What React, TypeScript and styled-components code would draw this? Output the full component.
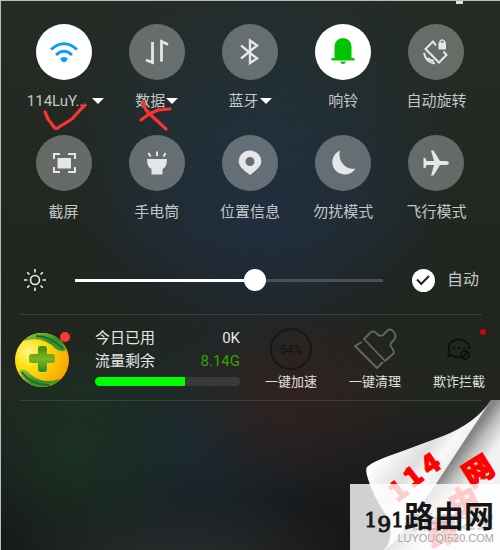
import React from "react";
import styled, { createGlobalStyle } from "styled-components";

const Global = createGlobalStyle`
  * { box-sizing: border-box; }
  body { margin: 0; background: #1d201c; }
  button, input { font: inherit; color: inherit; }
`;

const Shade = styled.main`
  position: relative;
  min-height: 100vh;
  overflow: hidden;
  border-top: 1px solid #b9bcb9;
  border-left: 1px solid #b9bcb9;
  font-family: Roboto, "Noto Sans CJK SC", sans-serif;
  color: #c4c7c6;
  background:
    radial-gradient(ellipse 200px 190px at 52% 130px, #20344299 0%, #20344266 50%, transparent 100%),
    radial-gradient(ellipse 190px 150px at 52% 215px, #1f2a42cc 0%, #1f2a4266 50%, transparent 100%),
    radial-gradient(ellipse 120px 100px at 59% 395px, #35201fcc 0%, transparent 100%),
    radial-gradient(ellipse 120px 130px at 14% 450px, #1a3523cc 0%, transparent 100%),
    radial-gradient(ellipse 140px 140px at 38% 445px, #1b2c34cc 0%, transparent 100%),
    radial-gradient(ellipse 190px 70px at 36% 560px, #2e2e2d 0%, transparent 100%),
    linear-gradient(#252b25 0, #20251f 300px, #22261f 390px, #1c1e20 450px, #141516 100%);
`;

const Tiles = styled.section`
  display: grid;
  grid-template-columns: repeat(5, 1fr);
  row-gap: 22px;
  padding: 23px 17px 0 16px;
`;

const Tile = styled.button`
  display: flex;
  flex-direction: column;
  align-items: center;
  gap: 9px;
  padding: 0;
  border: 0;
  background: none;
  font-size: 15px;
  line-height: 24px;
  white-space: nowrap;
`;

const Disc = styled.span<{ $on?: boolean }>`
  display: grid;
  place-items: center;
  width: 56px;
  height: 56px;
  border-radius: 50%;
  color: #e4e6e7;
  background: ${(p) => (p.$on ? "#fff" : "rgba(255,255,255,.31)")};
`;

const Caption = styled.span<{ $wide?: boolean }>`
  display: flex;
  align-items: center;
  padding-left: ${(p) => (p.$wide ? "4px" : "0")};
`;

const Caret = styled.i<{ $gap?: boolean }>`
  margin-left: ${(p) => (p.$gap ? "5px" : "1px")};
  border: 6px solid transparent;
  border-top-color: #fff;
  border-bottom: 0;
`;

const Brightness = styled.section`
  display: flex;
  align-items: center;
  padding: 44px 21px 22px 22px;
  height: 90px;
`;

const Range = styled.input<{ $value: number }>`
  flex: 1;
  min-width: 0;
  height: 24px;
  margin: 0 29px 0 28px;
  appearance: none;
  background: none;
  &::-webkit-slider-runnable-track {
    height: 3px;
    background: linear-gradient(to right, #fff ${(p) => p.$value}%, #4d5054 ${(p) => p.$value}%);
  }
  &::-webkit-slider-thumb {
    appearance: none;
    width: 22px;
    height: 22px;
    margin-top: -10px;
    border-radius: 50%;
    background: #fff;
  }
`;

const Auto = styled.label`
  display: flex;
  align-items: center;
  gap: 12px;
  font-size: 16px;
  line-height: 24px;
`;

const Tick = styled.input`
  appearance: none;
  display: grid;
  place-items: center;
  width: 23px;
  height: 23px;
  margin: 0;
  border-radius: 50%;
  background: #fff;
  &:checked::before {
    content: "";
    width: 10px;
    height: 5px;
    margin-bottom: 3px;
    border: solid #222;
    border-width: 0 0 2px 2px;
    transform: rotate(-45deg);
  }
`;

const Guard = styled.section`
  display: flex;
  align-items: flex-start;
  height: 87px;
  margin: 0 18px 0 19px;
  border: solid #3a3f3a;
  border-width: 1px 0;
`;

const Logo = styled.svg`
  flex: none;
  width: 60px;
  height: 60px;
  margin: 14px 15px 0 -7px;
`;

const Usage = styled.div`
  flex: 1;
  min-width: 0;
  padding-top: 12px;
  margin-left: 7px;
  color: #e6e8e6;
  font-size: 15px;
`;

const Line = styled.div<{ $green?: boolean }>`
  display: flex;
  justify-content: space-between;
  line-height: 23px;
  b { font-weight: 400; color: ${(p) => (p.$green ? "#2da30c" : "#e6e8e6")}; }
`;

const Meter = styled.div<{ $value: number }>`
  height: 9px;
  margin-top: 4px;
  border-radius: 5px;
  background: linear-gradient(to right, #0f0 ${(p) => p.$value}%, #3a3a38 ${(p) => p.$value}%);
`;

const Tools = styled.div`
  display: grid;
  grid-template-columns: repeat(3, 84px);
  margin: 10px -19px 0 9px;
  svg { overflow: visible; }
`;

const Tool = styled.button`
  display: flex;
  flex-direction: column;
  align-items: center;
  gap: 1px;
  padding: 0;
  border: 0;
  background: none;
  color: #dfe1df;
  font-size: 13px;
  line-height: 20px;
  white-space: nowrap;
`;

const Scribble = styled.svg`
  position: absolute;
  left: 12px;
  top: 61px;
  pointer-events: none;
`;

const Nub = styled.i`
  position: absolute;
  right: 37px;
  top: 0;
  width: 7px;
  height: 3px;
  background: #dcdedc;
`;

const Curl = styled.svg`
  position: absolute;
  right: 0;
  bottom: 0;
`;

const Mark = styled.footer`
  position: absolute;
  right: 0;
  bottom: 0;
  width: 150px;
  height: 66px;
  padding: 13px 6px 0 7px;
  background: rgba(255, 255, 255, .8);
  color: #151515;
  text-align: right;
`;

const Brand = styled.div`
  position: relative;
  display: flex;
  justify-content: flex-end;
  align-items: baseline;
  font: 700 30px/34px "Noto Sans CJK SC", sans-serif;
  white-space: nowrap;
`;

const Numeral = styled.span<{ $low?: boolean }>`
  font: 400 22px/20px "DejaVu Serif", serif;
  ${(p) => !p.$low && "font-size: 20px;"}
  ${(p) => p.$low && "transform: translateY(5px);"}
  -webkit-text-stroke: 1px #151515;
`;

const Ghost = styled.div`
  position: absolute;
  right: 6px;
  top: 27px;
  font: 700 18px/20px "Noto Sans CJK SC", sans-serif;
  color: rgba(120, 120, 120, .28);
  white-space: nowrap;
`;

const Site = styled.div`
  font: 11px/14px "Liberation Sans", sans-serif;
  color: #a6a6a6;
  text-shadow: 0 0 2px #fff;
  white-space: nowrap;
`;

const svg = { width: 28, height: 28, viewBox: "0 0 28 28", fill: "none", stroke: "currentColor", strokeWidth: 2.4 };

const icons = {
  wifi: (
    <svg {...svg} stroke="#0a9bfd" strokeWidth="2.8">
      <path d="M1 11.500Q14 0 27 11.500M6 17Q14 9.500 22 17" />
      <path d="M10 20.500Q14 17.500 18 20.500Q17 23 14 24.500Q11 23 10 20.500Z" fill="#0a9bfd" stroke="none" />
    </svg>
  ),
  data: <svg {...svg} strokeWidth="2.800"><path d="M9.500 4V24.500L3 22M18.500 23.500V3.500L25 6.500" /></svg>,
  bluetooth: <svg {...svg}><path d="M5 7.500L21 20.500L14 25V2.500L21 7.500L5 20.500" /></svg>,
  bell: (
    <svg {...svg} fill="#00c400" stroke="none">
      <path d="M5.500 20V8.500Q6 .5 14 0Q22 .5 22.500 8.500V20H25.500V22.500H2.500V20ZM11 23.500H17Q16 26 14 26Q12 26 11 23.500Z" />
    </svg>
  ),
  rotate: (
    <svg {...svg} strokeWidth="2">
      <path d="M14 7.500L11 3.500L3.500 11L17 24.500L24.500 17L21.500 13.500M2 15Q4 24.500 13 25.500M5.500 20Q8 22 12 23" />
      <path d="M16.500 4.500H24V11.500H16.500Z" fill="currentColor" stroke="none" />
      <path d="M18 5V3.500Q20.300 .5 22.500 3.500V5" strokeWidth="1.500" />
    </svg>
  ),
  shot: (
    <svg {...svg} strokeWidth="2">
      <path d="M4 10V5H10M18 5H25V10M25 18V23H18M10 23H4V18" /><path d="M7.500 9H21V19.500H7.500Z" fill="currentColor" stroke="none" />
    </svg>
  ),
  torch: (
    <svg {...svg} strokeWidth="2">
      <path d="M4 10H24Q24 18 19.500 20V25.500H8.500V20Q4 18 4 10Z" fill="currentColor" stroke="none" />
      <path d="M5.500 4L7.500 7.500M14 2.500V7M22.500 4L20.500 7.500" />
    </svg>
  ),
  pin: (
    <svg {...svg}>
      <path fillRule="evenodd" d="M14 1.500A11.300 11 0 0 1 25.300 12.500C25.300 18 19 22 14 26C9 22 2.700 18 2.700 12.500A11.300 11 0 0 1 14 1.500ZM14 8A4.500 4.500 0 1 0 14 17A4.500 4.500 0 1 0 14 8Z" fill="currentColor" stroke="none" />
    </svg>
  ),
  moon: <svg {...svg}><path d="M11 1.500A12.500 12.500 0 1 0 26.500 19.500Q19 21 14 15Q9 9 11 1.500Z" fill="currentColor" stroke="none" /></svg>,
  plane: (
    <svg {...svg} fill="currentColor" stroke="none">
      <path d="M1.500 9H3.500L4.500 12H12L9 1.500H11.500L18 12H24.500Q27 12.500 27 14Q27 15.500 24.500 16H18L11.500 26.500H9L12 16H4.500L3.500 19H1.500Z" />
    </svg>
  ),
};

const tiles: { icon: keyof typeof icons; label: string; on?: boolean; caret?: boolean }[] = [
  { icon: "wifi", label: "114LuY...", on: true, caret: true },
  { icon: "data", label: "数据", caret: true },
  { icon: "bluetooth", label: "蓝牙", caret: true },
  { icon: "bell", label: "响铃", on: true },
  { icon: "rotate", label: "自动旋转" },
  { icon: "shot", label: "截屏" },
  { icon: "torch", label: "手电筒" },
  { icon: "pin", label: "位置信息" },
  { icon: "moon", label: "勿扰模式" },
  { icon: "plane", label: "飞行模式" },
];

const GuardLogo = () => (
  <Logo viewBox="0 0 60 60" role="img" aria-label="360">
    <defs>
      <radialGradient id="gold" cx=".25" cy=".35" r=".8"><stop stopColor="#fff78a" /><stop offset=".35" stopColor="#ffe010" /><stop offset="1" stopColor="#f8a200" /></radialGradient>
      <linearGradient id="leaf" x2="1" y2="1"><stop stopColor="#a3c93a" /><stop offset=".55" stopColor="#2f8f2a" /><stop offset="1" stopColor="#4fa02c" /></linearGradient>
      <linearGradient id="cross" x2="0" y2="1"><stop stopColor="#3d8a1c" /><stop offset=".5" stopColor="#7db51f" /><stop offset="1" stopColor="#2a8a30" /></linearGradient>
    </defs>
    <circle cx="29" cy="31" r="27" fill="url(#gold)" />
    <path d="M10 12Q19 3 32 4Q49 7 53 21Q49 24 43 20Q30 6 10 12Z" fill="url(#leaf)" />
    <path d="M23 7Q38 7 50 20" stroke="#1c7023" strokeWidth="2" fill="none" />
    <path d="M6 42Q11 38 17 45Q29 56 47 50Q39 59 27 58Q12 56 6 42Z" fill="url(#leaf)" />
    <path d="M9 43Q18 56 36 56" stroke="#1c7023" strokeWidth="2" fill="none" />
    <path d="M27 17H31Q34 17 34 20V25H39Q42 25 42 28V31Q42 34 39 34H34V40Q34 43 31 43H28Q25 43 25 40V34H19Q16 34 16 31V28Q16 25 19 25H25V20Q25 17 27 17Z" fill="url(#cross)" />
    <circle cx="52" cy="8" r="5" fill="#ff3636" />
  </Logo>
);

const PageCurl = () => (
  <Curl width="135" height="150" viewBox="365 400 135 150" fontFamily="'Noto Sans CJK SC', sans-serif" fontWeight="900" fill="#fe0000" stroke="#fe0000" aria-hidden>
    <defs>
      <linearGradient id="under" gradientUnits="userSpaceOnUse" x1="454" y1="459" x2="486" y2="482">
        <stop stopColor="#858585" /><stop offset=".3" stopColor="#c0c0c0" /><stop offset=".7" stopColor="#f2f2f2" />
      </linearGradient>
      <linearGradient id="flap" gradientUnits="userSpaceOnUse" x1="385" y1="450" x2="440" y2="495">
        <stop stopColor="#fff" /><stop offset=".45" stopColor="#dedede" /><stop offset=".65" stopColor="#f8f8f8" /><stop offset="1" stopColor="#e5e5e5" />
      </linearGradient>
    </defs>
    <g stroke="none">
      <path d="M491 400H500V550H383Q400 535 410 518Z" fill="url(#under)" />
      <path d="M491 400Q476 423 443 436L400 452Q373 461 367 467Q365 470 368 479Q374 498 386 515Q396 537 384 550Q400 540 411 520L436 484Z" fill="url(#flap)" />
    </g>
    <g fontSize="27" textAnchor="middle">
      <text transform="translate(404 498) rotate(-38)">1</text>
      <text transform="translate(419 484) rotate(-38)">1</text>
      <text transform="translate(436 472) rotate(-34)">4</text>
    </g>
    <g fontSize="30" textAnchor="middle">
      <text transform="translate(484 480) rotate(-32)">网</text>
      <text transform="translate(468 511) rotate(-25)">由</text>
      <text transform="translate(446 542) rotate(-20)">路</text>
    </g>
  </Curl>
);

export default function App() {
  const [level, setLevel] = React.useState(59);
  return (
    <>
      <Global />
      <Shade>
        <Nub />
        <Tiles>
          {tiles.map((t) => (
            <Tile key={t.label}>
              <Disc $on={t.on}>{icons[t.icon]}</Disc>
              <Caption $wide={t.on && t.caret}>{t.label}{t.caret && <Caret $gap={t.on} />}</Caption>
            </Tile>
          ))}
        </Tiles>
        <Scribble width="180" height="80" viewBox="13 62 180 80" fill="none" stroke="#fb3432" strokeWidth="3.200" strokeLinecap="round" strokeLinejoin="round" aria-hidden>
          <path d="M45 112L48 119L54 127Q56 130 59 127L72 119L80 110L85 105" />
          <path d="M143 102L146 110L153 117L166 129M141 120L149 114L158 110L170 109" />
        </Scribble>
        <Brightness>
          <svg width="24" height="24" viewBox="0 0 24 24" fill="none" stroke="#eee" strokeWidth="1.600" aria-hidden>
            <circle cx="12" cy="12" r="4.500" />
            <path d="M12 1V4.500M12 19.500V23M1 12H4.500M19.500 12H23M4.200 4.200L6.500 6.500M17.500 17.500L19.800 19.800M4.200 19.800L6.500 17.500M17.500 6.500L19.800 4.200" />
          </svg>
          <Range type="range" aria-label="亮度" value={level} $value={level} onChange={(e) => setLevel(Number(e.target.value))} />
          <Auto><Tick type="checkbox" defaultChecked />自动</Auto>
        </Brightness>
        <Guard>
          <GuardLogo />
          <Usage>
            <Line>今日已用<b>0K</b></Line>
            <Line $green>流量剩余<b>8.14G</b></Line>
            <Meter $value={62} />
          </Usage>
          <Tools>
            <Tool>
              <svg width="46" height="46" viewBox="0 0 46 46">
                <circle cx="23" cy="24" r="20" fill="none" stroke="#151715" strokeWidth="2" />
                <text x="23" y="29" textAnchor="middle" fontSize="12" fill="#101210">54%</text>
              </svg>
              一键加速
            </Tool>
            <Tool>
              <svg width="46" height="46" viewBox="0 0 46 46" fill="none" stroke="#646765" strokeWidth="1.800" strokeLinejoin="round">
                <path d="M10 17L3 21L25 43L31 37M12 14L33 36L41 29Q43 27 40 23Q37 20 40 17Q45 12 43 9Q40 3 36 5L31 10Q28 12 25 9Q22 5 19 7Z" />
              </svg>
              一键清理
            </Tool>
            <Tool>
              <svg width="46" height="46" viewBox="0 0 46 46" fill="none" stroke="#0e100e" strokeWidth="1.800">
                <path d="M25 32Q19 33 16 30L12 32L14 28Q10 20 17 16Q24 12 30 17Q34 20 33 24M17 23H19M22 23H24M27 23H29" />
                <circle cx="29" cy="30" r="4" /><path d="M26 33L32 27" /><circle cx="47" cy="7" r="3" fill="#cb0505" stroke="none" />
              </svg>
              欺诈拦截
            </Tool>
          </Tools>
        </Guard>
        <PageCurl />
        <Mark>
          <Ghost aria-hidden>路由器之家</Ghost>
          <Brand><Numeral>1</Numeral><Numeral $low>9</Numeral><Numeral>1</Numeral>路由网</Brand>
          <Site>LUYOUQI520.COM</Site>
        </Mark>
      </Shade>
    </>
  );
}
